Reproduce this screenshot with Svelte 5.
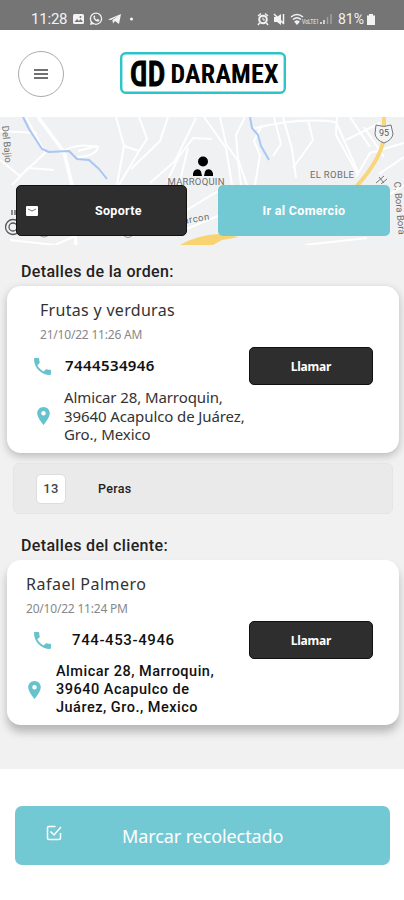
<script lang="ts">
	const order = {
		name: 'Frutas y verduras',
		date: '21/10/22 11:26 AM',
		phone: '7444534946',
		address: ['Almicar 28, Marroquin,', '39640 Acapulco de Juárez,', 'Gro., Mexico']
	};

	const client = {
		name: 'Rafael Palmero',
		date: '20/10/22 11:24 PM',
		phone: '744-453-4946',
		address: ['Almicar 28, Marroquin,', '39640 Acapulco de', 'Juárez, Gro., Mexico']
	};

	const products = [{ quantity: 13, name: 'Peras' }];
</script>

{#snippet phoneIcon()}
	<svg class="phone-icon" viewBox="3 3 18 18">
		<path
			d="M6.62 10.79c1.44 2.83 3.76 5.14 6.59 6.59l2.2-2.2c.27-.27.67-.36 1.02-.24 1.12.37 2.33.57 3.57.57.55 0 1 .45 1 1V20c0 .55-.45 1-1 1C10.61 21 3 13.39 3 4c0-.55.45-1 1-1h3.5c.55 0 1 .45 1 1 0 1.25.2 2.45.57 3.57.11.35.03.74-.25 1.02z"
		/>
	</svg>
{/snippet}

{#snippet pinIcon()}
	<svg class="pin-icon" viewBox="5 2 14 20">
		<path
			d="M12 2C8.13 2 5 5.13 5 9c0 5.25 7 13 7 13s7-7.75 7-13c0-3.87-3.13-7-7-7zm0 9.5a2.5 2.5 0 0 1 0-5 2.5 2.5 0 0 1 0 5z"
		/>
	</svg>
{/snippet}

<div class="app">
	<div class="status">
		<span class="clock">11:28</span>
		<svg class="status-left" viewBox="0 0 64 14">
			<rect x="1" y="2" width="11" height="10" rx="1.5" fill="#f3f3f3" />
			<path d="M2.5 10l2.5-3 2 2 1.5-2 2.5 3z" fill="#757575" />
			<circle cx="8.5" cy="5" r="1" fill="#757575" />
			<circle cx="24" cy="6.7" r="5.6" fill="none" stroke="#f3f3f3" stroke-width="1.3" />
			<path d="M18 13l1-4 3 3z" fill="#f3f3f3" />
			<path d="M21.5 4.2c-.6 3 2.8 6.3 5.7 5l.2-1.5-1.9-.8-.9.9-2-2 .7-1-.7-1.5z" fill="#f3f3f3" />
			<path d="M36 7.5L49 2l-2 10-4-3-2 2.5-.6-3.5 6-4-7.4 4z" fill="#f3f3f3" />
			<circle cx="59.5" cy="7" r="1.6" fill="#f3f3f3" />
		</svg>
		<svg class="status-right" viewBox="0 0 78 14">
			<g fill="none" stroke="#f3f3f3">
				<circle cx="7" cy="7.5" r="3.8" stroke-width="2" />
				<path d="M2 4l3-2.5M9 1.5L12 4M3.5 11l-1.5 2M10.5 11l1.5 2" stroke-width="1.5" />
				<path d="M7 5.5v2.5h2" />
				<path d="M18 2l10 10M27.5 2v10" stroke-width="1.5" />
				<path d="M35 5q6-5 12 0M37 7.5q4-3.5 8 0M39 10q2-2 4 0" stroke-width="1.5" />
			</g>
			<path d="M18 5h3l4-3v11l-4-3h-3z" fill="#f3f3f3" />
			<path d="M41 13l-3-3.5h6z" fill="#f3f3f3" />
			<text x="46" y="11.5" font-size="6.5" textLength="17" lengthAdjust="spacingAndGlyphs">VoLTE1</text>
			<path d="M65 12v-2M68 12V8" stroke="#eee" stroke-width="1.5" />
			<path d="M71.5 12V5M75 12V2" stroke="#a3a3a3" stroke-width="1.5" />
		</svg>
		<span class="percent">81%</span>
		<svg class="battery" viewBox="0 0 8 12">
			<path d="M2 1h4v1.5h2V12H0V2.5h2z" fill="#f3f3f3" />
		</svg>
	</div>

	<header>
		<button class="menu" aria-label="Menú">
			<svg viewBox="0 0 14 10"><path d="M0 1h14M0 5h14M0 9h14" /></svg>
		</button>
		<svg class="logo" viewBox="0 0 166 42">
			<rect x="1.2" y="1.2" width="163.6" height="39.6" rx="4.5" />
			<g transform="translate(27.3 34) scale(-.75 1)"><text class="mark" x="0" y="0">D</text></g>
			<g transform="translate(27.9 34) scale(.75 1)"><text class="mark" x="0" y="0">D</text></g>
			<text class="word" x="50.500" y="31" textLength="108" lengthAdjust="spacing">DARAMEX</text>
		</svg>
	</header>

	<section class="map">
		<svg class="map-canvas" viewBox="0 117 404 128">
			<rect y="117" width="404" height="128" fill="#eff1f3" />
			<g class="streets">
				<path d="M38 117L64 152 72 185 76 245" stroke-width="3.5" />
				<path d="M0 160L20 176 45 153 26 117M12 185l16-17 26 2M0 131l37 2M60 153Q75 142 98 147 96 156 78 157" />
				<path d="M116 117l8 29 15 5 8-12-8-22M124 146l-7 39M139 151l-20 34M78 151l19-5" />
				<path d="M150 183l25-22 21-43M167 182l11-24 15-20 19 1M131 169l29-28 8-24M188 148l-9 37" />
				<path d="M204 117l22 31 6 37M220 117l6 27 12 17 3 24M245 117l-9 18 2 24 9 26M262 125l-8 16 6 14-5 30" />
				<path d="M252 129q45-12 84-7l22 50M274 117l7 27-8 12M283 117l9 32 4 29M308 120l5 20-20 28" />
				<path d="M337 117l-1 18 21 38M350 117l20 30M364 127l20 30M404 143l-34 10-14 24M346 140l34-17M404 157l-25 17" />
				<path d="M187 210l31-19M184 230l34-14M10 240l45 5 20-9M205 245l15-8M305 245l62-7M381 200l23-15" />
			</g>
			<path class="river" d="M23 117l6 12 13 20 7 3 20-1 8 8 12 1 10 9 8 10" />
			<path class="river" d="M250 117l2 11 6 7 3 11 8 14" />
			<path class="road" d="M384 117v18q-1 22-28 52" />
			<path d="M180 245q17-10 39-11l20 3-17 3-9 5z" fill="#f8d372" />
			<g class="shield">
				<path d="M376 125q8 3 15 0l2 9q-1 6-9 9-8-3-9-9z" />
				<text x="379" y="136" font-size="9">95</text>
			</g>
			<g class="labels">
				<text x="167.5" y="184.5" textLength="57">MARROQUIN</text>
				<text x="310" y="177.5" textLength="44">EL ROBLE</text>
				<text transform="translate(2 126) rotate(85)" textLength="37">Del Bajio</text>
				<text transform="translate(394 182) rotate(85)" textLength="53">C. Bora Bora</text>
				<text transform="translate(184 224) rotate(-10)" textLength="26">arcon</text>
			</g>
			<g class="rings"><circle cx="13" cy="227" r="7.5" /><circle cx="13" cy="227" r="4" /><path d="M12 210v5M15 210v5" /></g>
			<path d="M39 235q5 4 10 0M123 235q5 5 10 0" fill="none" stroke="#999" />
			<path d="M376 183l8-7M381 184l6-5M379 177l5 6" stroke="#777" />
			<circle cx="203" cy="161.5" r="5" />
			<path d="M193 176v-2.500q1-4 4-4.300 3-.2 4 2.300l1 4.500zM204 176l1-4.500q1-2.500 4-2.300 3 .3 4 4.300v2.500z" />
		</svg>
		<div class="map-actions">
			<button class="dark support">
				<svg viewBox="0 0 12 10"><rect width="12" height="10" rx="1" fill="#fff" /><path d="M2 3l4 2 4-2" fill="none" stroke="#777" /></svg>
				<span>Soporte</span>
			</button>
			<button class="teal">Ir al Comercio</button>
		</div>
	</section>

	<main>
		<h2>Detalles de la orden:</h2>
		<div class="card order">
			<div class="name">{order.name}</div>
			<div class="date">{order.date}</div>
			<div class="contact">
				{@render phoneIcon()}
				<span class="phone">{order.phone}</span>
				<button class="dark call">Llamar</button>
			</div>
			<div class="place">
				{@render pinIcon()}
				<div class="address">
					{#each order.address as line}
						<div>{line}</div>
					{/each}
				</div>
			</div>
		</div>

		{#each products as product}
			<div class="product">
				<span class="quantity">{product.quantity}</span>
				<span>{product.name}</span>
			</div>
		{/each}

		<h2 class="second">Detalles del cliente:</h2>
		<div class="card client">
			<div class="name">{client.name}</div>
			<div class="date">{client.date}</div>
			<div class="contact">
				{@render phoneIcon()}
				<span class="phone">{client.phone}</span>
				<button class="dark call">Llamar</button>
			</div>
			<div class="place">
				{@render pinIcon()}
				<div class="address">
					{#each client.address as line}
						<div>{line}</div>
					{/each}
				</div>
			</div>
		</div>
	</main>

	<footer>
		<button class="teal collect">
			<svg viewBox="0 0 16 16"><path d="M9.5 1.5H3Q1.500 1.500 1.500 3v10q0 1.500 1.500 1.500h10q1.500 0 1.500-1.500V8M4.500 6.500L8 10l7-8" /></svg>
			<span>Marcar recolectado</span>
		</button>
	</footer>
</div>

<style>
	:global(body) {
		background: #fff;
	}

	.app {
		width: 404px;
		height: 900px;
		display: flex;
		flex-direction: column;
		overflow: hidden;
		font-family: Roboto, sans-serif;
		color: #222;
	}

	svg {
		display: block;
		flex: none;
	}

	button {
		border: none;
		padding: 0;
		font: bold 13px Roboto, sans-serif;
		color: #fff;
	}

	.dark {
		background: #2e2e2e;
		border: 1px solid #111;
		border-radius: 5px;
	}

	.teal {
		background: #73c9d3;
		border-radius: 5px;
	}

	.status {
		box-sizing: border-box;
		height: 30px;
		padding: 8px 29px 0 31px;
		display: flex;
		align-items: center;
		background: #757575;
		color: #f3f3f3;
		font-size: 15px;
	}

	.clock {
		width: 41px;
		letter-spacing: -0.2px;
	}

	.status-left {
		width: 64px;
		height: 14px;
	}

	.status-right {
		width: 78px;
		height: 14px;
		margin-left: auto;
		fill: #eee;
	}

	.percent {
		width: 29px;
		margin-left: 4px;
		font-size: 14px;
	}

	.battery {
		width: 8px;
		height: 12px;
	}

	header {
		box-sizing: border-box;
		height: 87px;
		padding: 21px 0 0 18px;
		display: flex;
		align-items: flex-start;
		background: #fff;
	}

	.menu {
		width: 46px;
		height: 46px;
		display: grid;
		place-items: center;
		border: 1px solid #aaa;
		border-radius: 50%;
		background: #fff;
	}

	.menu svg {
		width: 14px;
		height: 10px;
		stroke: #444;
		stroke-width: 1.5;
	}

	.logo {
		width: 166px;
		height: 42px;
		margin: 1px 0 0 56px;
		overflow: visible;
	}

	.logo rect {
		fill: #fff;
		stroke: #2cc4c8;
		stroke-width: 2.4;
	}

	.mark {
		font: bold 35px Roboto, sans-serif;
		stroke: #000;
		stroke-width: 1;
	}

	.word {
		font: bold 26px 'Roboto Condensed', Roboto, sans-serif;
	}

	.map {
		height: 128px;
		display: grid;
	}

	.map-canvas,
	.map-actions {
		grid-area: 1 / 1;
	}

	.map-canvas {
		width: 404px;
		height: 128px;
		overflow: hidden;
	}

	.streets {
		fill: none;
		stroke: #fff;
		stroke-width: 2;
		stroke-linejoin: round;
	}

	.river {
		fill: none;
		stroke: #a9c6f4;
		stroke-width: 2;
		stroke-linejoin: round;
	}

	.road {
		fill: none;
		stroke: #f8d67c;
		stroke-width: 4;
	}

	.shield {
		fill: #555;
		font-family: Roboto, sans-serif;
	}

	.shield path {
		fill: #f5f5f5;
		stroke: #777;
	}

	.labels {
		fill: #6f6f6f;
		font: 9.5px Roboto, sans-serif;
	}

	.rings {
		fill: none;
		stroke: #555;
		stroke-width: 1.3;
	}

	.map-actions {
		z-index: 1;
		display: flex;
		gap: 31px;
		padding: 68px 14px 9px 16px;
	}

	.map-actions button {
		width: 172px;
		height: 51px;
		font-size: 12.5px;
		letter-spacing: 0.3px;
	}

	.map-actions .dark {
		width: 171px;
	}

	.support {
		display: flex;
		align-items: center;
	}

	.support svg {
		width: 12px;
		height: 10px;
		margin: 0 57px 0 9px;
	}

	main {
		box-sizing: border-box;
		height: 524px;
		padding: 17px 5px 0 7px;
		background: #f1f1f1;
	}

	h2 {
		height: 20px;
		margin: 0 0 4px 14px;
		font-size: 16px;
		font-weight: 500;
		line-height: 20px;
		letter-spacing: 0.35px;
	}

	.second {
		margin: 22px 0 4px 14px;
	}

	.card {
		box-sizing: border-box;
		height: 167px;
		border-radius: 14px;
		background: #fff;
		box-shadow: 0 3px 8px rgba(0, 0, 0, 0.24);
	}

	.client {
		height: 165px;
		box-shadow: 0 7px 9px rgba(0, 0, 0, 0.24);
	}

	.name {
		height: 36px;
		padding: 13px 0 0 33px;
		box-sizing: border-box;
		font: 16px/22px 'Noto Sans', sans-serif;
		letter-spacing: 0.3px;
		color: #333;
	}

	.date {
		height: 25px;
		padding: 4px 0 0 33px;
		box-sizing: border-box;
		font: 12px/18px 'Noto Sans', sans-serif;
		letter-spacing: -0.2px;
		color: #888;
	}

	.contact {
		height: 38px;
		display: flex;
		align-items: center;
		padding-left: 27px;
	}

	.phone-icon {
		width: 17px;
		height: 17px;
		fill: #66c3ce;
	}

	.phone {
		width: 185px;
		padding: 0 0 2px 14px;
		box-sizing: border-box;
		font: 600 15px 'Noto Sans', sans-serif;
		letter-spacing: 0.4px;
		color: #111;
	}

	.call {
		width: 124px;
		height: 38px;
		margin-left: auto;
		margin-right: 26px;
		font: bold 12px 'Noto Sans', sans-serif;
		letter-spacing: -0.2px;
	}

	.place {
		display: flex;
		align-items: center;
		padding: 3px 0 0 30px;
	}

	.pin-icon {
		width: 13px;
		height: 18px;
		fill: #66c3ce;
	}

	.address {
		padding-left: 14px;
		font: 15px/18.5px 'Noto Sans', sans-serif;
		letter-spacing: -0.1px;
		color: #333;
	}

	.client .name,
	.client .date {
		padding-left: 19px;
	}

	.client .name {
		letter-spacing: 0.5px;
	}

	.client .phone {
		padding: 0 0 0 21px;
		font: 500 15px Roboto, sans-serif;
		letter-spacing: 0.6px;
	}

	.client .place {
		padding: 4px 0 0 21px;
	}

	.client .address {
		padding-left: 15px;
		font: 500 14.5px/18px Roboto, sans-serif;
		color: #111;
		letter-spacing: 0.5px;
	}

	.product {
		box-sizing: border-box;
		height: 51px;
		margin: 10px 6px 0 6px;
		padding-left: 22px;
		display: flex;
		align-items: center;
		gap: 32px;
		border: 1px solid #e5e5e5;
		border-radius: 6px;
		background: #eaeaea;
		font: 500 12.5px Roboto, sans-serif;
		letter-spacing: 0.3px;
	}

	.quantity {
		width: 28px;
		height: 28px;
		display: grid;
		place-items: center;
		border: 1px solid #ddd;
		border-radius: 5px;
		background: #fff;
		font-size: 13px;
		color: #444;
	}

	footer {
		height: 94px;
		padding: 37px 14px 0 15px;
		background: #fff;
	}

	.collect {
		width: 375px;
		height: 59px;
		padding-left: 31px;
		display: flex;
		align-items: center;
		gap: 60px;
		border-radius: 7px;
		font: 18px 'Noto Sans', sans-serif;
		letter-spacing: -0.1px;
	}

	.collect svg {
		width: 16px;
		height: 16px;
		margin-top: -5px;
		fill: none;
		stroke: #fff;
		stroke-width: 1.5;
	}
</style>
